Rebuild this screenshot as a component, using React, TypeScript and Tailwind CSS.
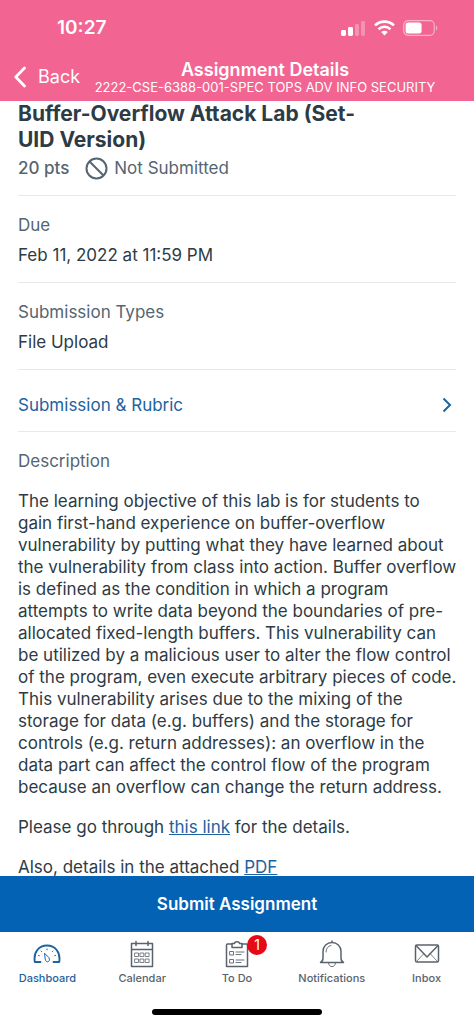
import type { ReactNode } from "react";

function StatusBar() {
  return (
    <div className="flex h-14 items-center justify-between pr-9 pl-14">
      <time className="pl-px text-[19px] font-semibold">10:27</time>
      <div className="flex items-center gap-2">
        <svg width="25" height="16" viewBox="0 0 25 16" fill="currentColor" aria-label="Signal">
          <rect x="0" y="10" width="5" height="6" rx="1.4" />
          <rect x="7" y="7" width="5" height="9" rx="1.4" />
          <rect x="14" y="4" width="4" height="12" rx="1.4" opacity="0.3" />
          <rect x="20" y="1" width="4" height="15" rx="1.4" opacity="0.3" />
        </svg>
        <svg width="21" height="16" viewBox="0 0 21 16" fill="none" stroke="currentColor" strokeWidth="2.6" aria-label="Wi-Fi">
          <path d="M1 5.4C6.4 .4 14.6 .4 20 5.4" />
          <path d="M4.5 9.2C8 6 13 6 16.5 9.2" />
          <path d="M7.2 12.1c1.9-1.7 4.7-1.7 6.6 0L10.5 15.6z" fill="currentColor" stroke="none" />
        </svg>
        <svg width="35" height="16" viewBox="0 0 35 16" fill="none" aria-label="Battery">
          <rect x=".7" y=".7" width="30.6" height="14.6" rx="4.5" stroke="currentColor" strokeWidth="1.2" opacity="0.5" />
          <rect x="2.6" y="2.6" width="16" height="10.8" rx="2.5" fill="currentColor" />
          <path d="M33 5.5c1.8.8 1.8 4.2 0 5z" fill="currentColor" opacity="0.5" />
        </svg>
      </div>
    </div>
  );
}

function Header() {
  return (
    <header className="shrink-0 bg-[#f26491] text-white">
      <StatusBar />
      <div className="flex h-[45px] items-start pl-[14px]">
        <button type="button" className="flex h-[42px] items-center gap-3 text-lg">
          <svg width="12" height="22" viewBox="0 0 12 22" fill="none" stroke="currentColor" strokeWidth="2.8" strokeLinecap="round" strokeLinejoin="round" aria-hidden="true">
            <path d="M10.5 2L1.8 11l8.7 9" />
          </svg>
          Back
        </button>
        <div className="flex-1 pt-1 pr-6 text-center whitespace-nowrap">
          <h1 className="text-lg leading-5 font-semibold">Assignment Details</h1>
          <p className="text-[13px] leading-[15px]">2222-CSE-6388-001-SPEC TOPS ADV INFO SECURITY</p>
        </div>
      </div>
    </header>
  );
}

function Field({ label, value }: { label: string; value: string }) {
  return (
    <div className="border-b border-[#e6e8ea] pt-[18px] pb-4">
      <dt className="leading-[22px] text-[#556572]">{label}</dt>
      <dd className="pt-2 leading-[22px]">{value}</dd>
    </div>
  );
}

function Tab({ label, active, badge, children }: { label: string; active?: boolean; badge?: number; children: ReactNode }) {
  return (
    <a
      href="#"
      aria-current={active ? "page" : undefined}
      className={`flex flex-1 flex-col items-center text-[11px] leading-4 font-medium ${active ? "text-[#1d639f]" : "text-[#59636d]"}`}
    >
      <span className="relative flex h-8 items-center">
        <svg width="28" height="28" viewBox="0 0 28 28" fill="none" stroke="currentColor" strokeWidth="1.5" strokeLinecap="round" strokeLinejoin="round" aria-hidden="true">
          {children}
        </svg>
        {badge && (
          <span className="absolute -top-[3px] left-6 flex size-5 items-center justify-center rounded-full bg-[#e60a16] text-sm font-normal text-white">
            {badge}
          </span>
        )}
      </span>
      {label}
    </a>
  );
}

function TabBar() {
  return (
    <nav className="flex shrink-0 pt-[6px] pb-[23px]">
      <Tab label="Dashboard" active>
        <path d="M7.5 22H1.8C.2 12 6 5.5 14 5.5S27.8 12 26.2 22H20.5" strokeWidth="1.9" />
        <path d="M11.8 13.5l4 4c2.5 4-2.8 6.5-3.5 2z" strokeWidth="1" />
        <path d="M5.5 15.5l.8.2M8 11l.6.6M14 9v.8M20 11l-.6.6M22.5 15.5l-.8.2" strokeWidth="1" />
      </Tab>
      <Tab label="Calendar">
        <path d="M3.5 3.5h21v23h-21zM3.5 9.5h21M8 1.5v4M20 1.5v4" />
        <path d="M7 13h3.5v3.5H7zM12.3 13h3.5v3.5h-3.5zM17.6 13h3.5v3.5h-3.5zM7 19h3.5v3.5H7zM12.3 19h3.5v3.5h-3.5zM17.6 19h3.5v3.5h-3.5z" strokeWidth=".8" />
      </Tab>
      <Tab label="To Do" badge={1}>
        <path d="M9 4H4.5Q3.5 4 3.5 5V26.5h21V5Q24.5 4 23.5 4H19" />
        <path d="M9 3.5h2.5c0-2.5 5-2.5 5 0H19v4H9z" />
        <path d="M7 11.5h3.5V15H7zM7 19.5h3.5V23H7zM13 12h8M13 14.5h5M13 20h8M13 22.5h5" strokeWidth=".9" />
      </Tab>
      <Tab label="Notifications">
        <path d="M2.5 22.5h23c-2-1-2.5-2.5-2.5-4.5V11.5C23 6 19 2.5 14 2.5S5 6 5 11.5V18c0 2-.5 3.5-2.5 4.5zM14 1v1.5" />
        <path d="M10.5 23c.2 5 6.8 5 7 0M8 12c0-3.5 2-6 5-6.5" strokeWidth=".9" />
      </Tab>
      <Tab label="Inbox">
        <rect x="2.5" y="5" width="23" height="17" rx="1.5" />
        <path d="M3 5.5l11 11.5L25 5.5" />
        <path d="M3.5 21.5l7-7.5M24.5 21.5l-7-7.5" strokeWidth=".8" />
      </Tab>
    </nav>
  );
}

export default function App() {
  return (
    <div className="flex h-dvh flex-col bg-white font-[Inter,'Liberation_Sans',sans-serif] text-[17px] text-[#2d3b45]">
      <Header />
      <main className="min-h-0 flex-1 overflow-y-auto px-[18px] [scrollbar-width:none]">
        <h2 className="pr-20 text-[21px] leading-[26px] font-bold">Buffer-Overflow Attack Lab (Set-UID Version)</h2>
        <div className="flex items-center gap-4 border-b border-[#e6e8ea] pt-[3px] pb-[15px] leading-6 text-[#556572]">
          <span className="font-medium">20 pts</span>
          <span className="flex items-center gap-[6px]">
            <svg width="23" height="23" viewBox="0 0 23 23" fill="none" stroke="currentColor" strokeWidth="2" aria-hidden="true">
              <circle cx="11.5" cy="11.5" r="10" />
              <path d="M4.5 4.5l14 14" />
            </svg>
            Not Submitted
          </span>
        </div>
        <dl>
          <Field label="Due" value="Feb 11, 2022 at 11:59 PM" />
          <Field label="Submission Types" value="File Upload" />
        </dl>
        <a href="#" className="flex items-center justify-between border-b border-[#e6e8ea] pt-6 pr-1 pb-[15px] leading-[22px] text-[#1d639f]">
          Submission &amp; Rubric
          <svg width="10" height="16" viewBox="0 0 10 16" fill="none" stroke="currentColor" strokeWidth="2" aria-hidden="true">
            <path d="M1.5 1.5L8 8l-6.5 6.5" />
          </svg>
        </a>
        <h3 className="pt-[18px] leading-[22px] text-[#556572]">Description</h3>
        <div className="-mr-0.5 flex flex-col gap-[18px] pt-[18px] leading-[22px]">
          <p>
            The learning objective of this lab is for students to gain first-hand experience on buffer-overflow
            vulnerability by putting what they have learned about the vulnerability from class into action. Buffer
            overflow is defined as the condition in which a program attempts to write data beyond the boundaries of
            pre-allocated fixed-length buffers. This vulnerability can be utilized by a malicious user to alter the flow
            control of the program, even execute arbitrary pieces of code. This vulnerability arises due to the mixing
            of the storage for data (e.g. buffers) and the storage for controls (e.g. return addresses): an overflow in
            the data part can affect the control flow of the program because an overflow can change the return address.
          </p>
          <p>
            Please go through <a href="#" className="text-[#1d639f] underline">this link</a> for the details.
          </p>
          <p>
            Also, details in the attached <a href="#" className="text-[#1d639f] underline">PDF</a>
          </p>
        </div>
      </main>
      <button type="button" className="h-14 shrink-0 bg-[#0362b4] pt-[2px] text-[17px] font-semibold text-white">
        Submit Assignment
      </button>
      <TabBar />
      <div className="mx-auto mb-[9px] h-[6px] w-[36%] shrink-0 rounded-full bg-black" />
    </div>
  );
}
